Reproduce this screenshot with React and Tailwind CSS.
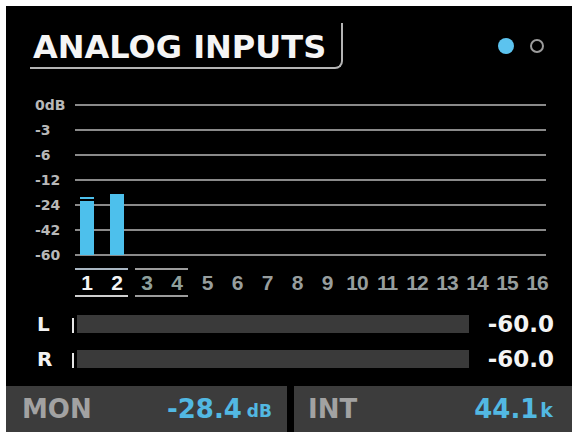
import React from 'react'

const dbMarks = ['0dB', '-3', '-6', '-12', '-24', '-42', '-60']
const bars = [
  { ch: 1, h: 54, peak: 58 },
  { ch: 2, h: 61, peak: 61 },
]
const dejavu = { fontFamily: '"DejaVu Sans", sans-serif' }
const lib = { fontFamily: '"Liberation Sans", Arial, sans-serif' }

function StereoRow({ label }) {
  return (
    <div className="flex items-center h-[18px] pl-[31px] pr-[18px]">
      <span className="w-[35px] text-[20px] font-bold leading-none text-[#f2f2f2]" style={dejavu}>
        {label}
      </span>
      <div className="w-[2px] h-[15px] bg-[#e6e6e6] mt-[3px]" />
      <div className="ml-[3px] w-[392px] h-[18px] bg-[#3a3a3a]" />
      <span className="ml-auto text-[23px] font-bold leading-none text-[#f4f4f4]" style={dejavu}>
        -60.0
      </span>
    </div>
  )
}

export default function App() {
  return (
    <div className="w-[576px] h-[437px] bg-white pl-[6px] pt-[6px] pr-[4px] pb-[5px]">
      <div className="relative w-full h-full bg-black flex flex-col overflow-hidden">
        {/* header */}
        <div className="h-[86px] flex items-start pl-[24px] pr-[28px]">
          <div className="mt-[17px] w-[313px] h-[46px] border-b-2 border-r-2 border-[#b4b4b4] rounded-br-[8px] pl-[3px] pt-[8px]">
            <span className="block text-[32px] font-bold leading-[32px] text-[#f5f5f5]" style={dejavu}>
              ANALOG INPUTS
            </span>
          </div>
          <div className="ml-auto mt-[32px] flex items-center gap-[16px]">
            <div className="w-[16px] h-[16px] rounded-full bg-[#5cc3ef]" />
            <div className="w-[14px] h-[14px] rounded-full border-2 border-[#9c9c9c]" />
          </div>
        </div>

        {/* meter grid */}
        <div className="relative h-[175px]">
          {dbMarks.map((m) => (
            <div key={m} className="h-[25px] flex items-center pl-[29px]">
              <span className="w-[40px] text-[14px] font-bold leading-none text-[#b8b8b8]" style={dejavu}>
                {m}
              </span>
              <div className="w-[471px] h-[2px] bg-[#8a8a8a]" />
            </div>
          ))}
          <div className="absolute left-[66px] top-0 h-[163px] flex items-end">
            {bars.map((b) => (
              <div key={b.ch} className="relative w-[30px] flex justify-center">
                <div className="w-[14px] bg-[#4dc0ec]" style={{ height: b.h }} />
                <div
                  className="absolute left-[8px] w-[14px] h-[2px] bg-[#4dc0ec]"
                  style={{ bottom: b.peak - 2 }}
                />
              </div>
            ))}
          </div>
        </div>

        {/* channel numbers */}
        <div className="mt-[1px] flex pl-[66px] text-[21px] font-bold leading-none" style={lib}>
          <div className="w-[60px] flex flex-col">
            <div className="h-[2px] ml-[3px] mr-[4px] bg-[#a9b6c2]" />
            <div className="h-[25px] flex items-center text-[#f4f4f4]">
              <span className="w-[30px] text-center">1</span>
              <span className="w-[30px] text-center">2</span>
            </div>
            <div className="h-[2px] ml-[3px] mr-[4px] bg-[#cfcfcf]" />
          </div>
          <div className="w-[60px] flex flex-col">
            <div className="h-[2px] ml-[3px] mr-[4px] bg-[#9c9c9c]" />
            <div className="h-[25px] flex items-center text-[#8fa09d]">
              <span className="w-[30px] text-center">3</span>
              <span className="w-[30px] text-center">4</span>
            </div>
            <div className="h-[2px] ml-[3px] mr-[4px] bg-[#9c9c9c]" />
          </div>
          {[5, 6, 7, 8, 9, 10, 11, 12, 13, 14, 15, 16].map((n) => (
            <span key={n} className="w-[30px] h-[29px] flex items-center justify-center text-[#979e9e] tracking-[-1px]">
              {n}
            </span>
          ))}
        </div>

        {/* L / R */}
        <div className="mt-[18px] flex flex-col gap-[17px]">
          <StereoRow label="L" />
          <StereoRow label="R" />
        </div>

        {/* footer */}
        <div className="mt-auto h-[46px] flex gap-[7px]">
          <div className="w-[281px] bg-[#3c3c3c] flex items-center pl-[16px] pr-[15px]" style={dejavu}>
            <span className="text-[26px] font-bold leading-none text-[#a2a2a2]">MON</span>
            <span className="ml-auto text-[26px] font-bold leading-none text-[#52b8e2]">-28.4</span>
            <span className="ml-[5px] mt-[5px] text-[17px] font-bold leading-none text-[#52b8e2]">dB</span>
          </div>
          <div className="flex-1 bg-[#3c3c3c] flex items-center pl-[14px] pr-[19px]" style={dejavu}>
            <span className="text-[26px] font-bold leading-none text-[#a2a2a2]">INT</span>
            <span className="ml-auto text-[26px] font-bold leading-none text-[#52b8e2]">44.1</span>
            <span className="ml-[2px] mt-[3px] text-[19px] font-bold leading-none text-[#52b8e2]">k</span>
          </div>
        </div>
      </div>
    </div>
  )
}
